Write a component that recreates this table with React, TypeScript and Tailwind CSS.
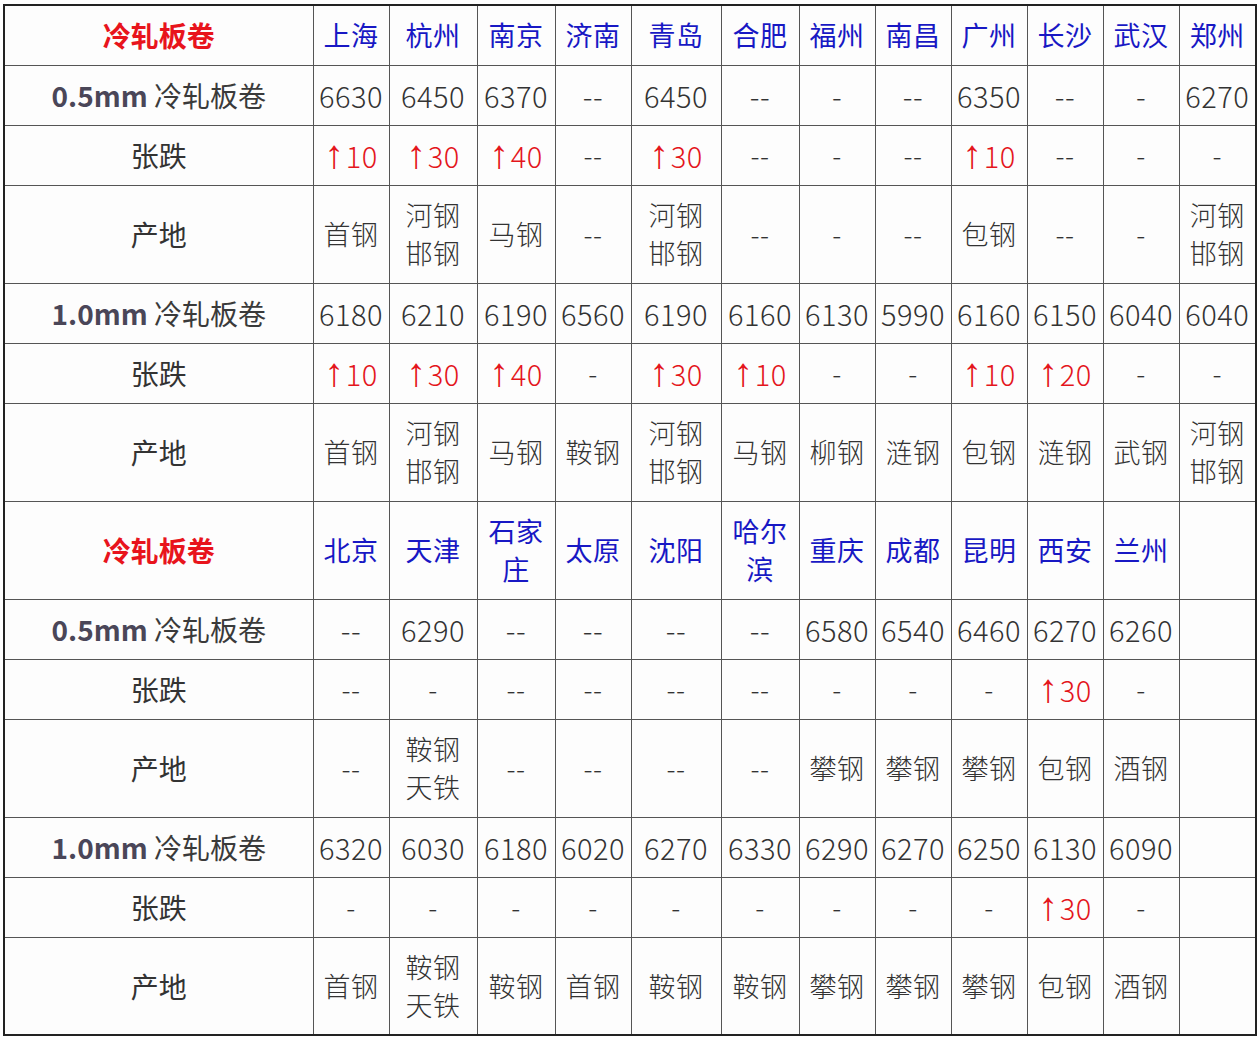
import React from "react";

type Cell = string;
type Row = { kind: "head" | "val" | "chg" | "src"; label: string; cells: Cell[] };

const widths = [309, 76, 88, 78, 76, 90, 78, 76, 76, 76, 76, 76, 77];

const rows: Row[] = [
  { kind: "head", label: "冷轧板卷", cells: ["上海", "杭州", "南京", "济南", "青岛", "合肥", "福州", "南昌", "广州", "长沙", "武汉", "郑州"] },
  { kind: "val", label: "0.5mm", cells: ["6630", "6450", "6370", "--", "6450", "--", "-", "--", "6350", "--", "-", "6270"] },
  { kind: "chg", label: "张跌", cells: ["↑10", "↑30", "↑40", "--", "↑30", "--", "-", "--", "↑10", "--", "-", "-"] },
  { kind: "src", label: "产地", cells: ["首钢", "河钢|邯钢", "马钢", "--", "河钢|邯钢", "--", "-", "--", "包钢", "--", "-", "河钢|邯钢"] },
  { kind: "val", label: "1.0mm", cells: ["6180", "6210", "6190", "6560", "6190", "6160", "6130", "5990", "6160", "6150", "6040", "6040"] },
  { kind: "chg", label: "张跌", cells: ["↑10", "↑30", "↑40", "-", "↑30", "↑10", "-", "-", "↑10", "↑20", "-", "-"] },
  { kind: "src", label: "产地", cells: ["首钢", "河钢|邯钢", "马钢", "鞍钢", "河钢|邯钢", "马钢", "柳钢", "涟钢", "包钢", "涟钢", "武钢", "河钢|邯钢"] },
  { kind: "head", label: "冷轧板卷", cells: ["北京", "天津", "石家|庄", "太原", "沈阳", "哈尔|滨", "重庆", "成都", "昆明", "西安", "兰州", ""] },
  { kind: "val", label: "0.5mm", cells: ["--", "6290", "--", "--", "--", "--", "6580", "6540", "6460", "6270", "6260", ""] },
  { kind: "chg", label: "张跌", cells: ["--", "-", "--", "--", "--", "--", "-", "-", "-", "↑30", "-", ""] },
  { kind: "src", label: "产地", cells: ["--", "鞍钢|天铁", "--", "--", "--", "--", "攀钢", "攀钢", "攀钢", "包钢", "酒钢", ""] },
  { kind: "val", label: "1.0mm", cells: ["6320", "6030", "6180", "6020", "6270", "6330", "6290", "6270", "6250", "6130", "6090", ""] },
  { kind: "chg", label: "张跌", cells: ["-", "-", "-", "-", "-", "-", "-", "-", "-", "↑30", "-", ""] },
  { kind: "src", label: "产地", cells: ["首钢", "鞍钢|天铁", "鞍钢", "首钢", "鞍钢", "鞍钢", "攀钢", "攀钢", "攀钢", "包钢", "酒钢", ""] },
];

function Label({ row }: { row: Row }) {
  if (row.kind === "head") {
    return <span className="font-bold text-[28px] text-[#e8141c]">{row.label}</span>;
  }
  if (row.kind === "val") {
    return (
      <span className="text-[28px] text-[#3a3a3a]">
        <span className="font-bold text-[#4a4658]">{row.label}</span> 冷轧板卷
      </span>
    );
  }
  return <span className="text-[28px] text-[#333]">{row.label}</span>;
}

function Value({ row, text }: { row: Row; text: string }) {
  const lines = text.split("|");
  if (row.kind === "head") {
    return (
      <div className="text-[27px] leading-[38px] text-[#1818c4]">
        {lines.map((l, i) => (
          <div key={i}>{l}</div>
        ))}
      </div>
    );
  }
  if (text.startsWith("↑")) {
    return (
      <div className="text-[29px] font-light leading-[38px] text-[#e4161c]">
        <span
          className="text-[40px] leading-[0px] mr-[1px]"
          style={{ fontFamily: '"Liberation Sans", "DejaVu Sans", sans-serif' }}
        >
          ↑
        </span>
        {text.slice(1)}
      </div>
    );
  }
  return (
    <div className={`${row.kind === "val" ? "text-[29px]" : "text-[27px]"} font-light leading-[38px] text-[#333]`}>
      {lines.map((l, i) => (
        <div key={i}>{l}</div>
      ))}
    </div>
  );
}

export default function App() {
  return (
    <div
      className="min-h-[1042px] w-[1260px] bg-white pl-[3px] pt-[4px]"
      style={{ fontFamily: '"Noto Sans CJK SC", "Noto Sans", sans-serif' }}
    >
      <table className="table-fixed border-collapse border-2 border-[#222] bg-[#fdfdfd] w-[1253px]">
        <colgroup>
          {widths.map((w, i) => (
            <col key={i} style={{ width: w }} />
          ))}
        </colgroup>
        <tbody>
          {rows.map((row, ri) => {
            const tall = row.kind === "src" || (row.kind === "head" && ri > 0);
            return (
              <tr key={ri} className={tall ? "h-[98px]" : "h-[60px]"}>
                <td className="border border-[#555] text-center align-middle p-0 whitespace-nowrap">
                  <Label row={row} />
                </td>
                {row.cells.map((c, ci) => (
                  <td
                    key={ci}
                    className="border border-[#555] text-center align-middle p-0 whitespace-nowrap tracking-[0.5px]"
                  >
                    <Value row={row} text={c} />
                  </td>
                ))}
              </tr>
            );
          })}
        </tbody>
      </table>
    </div>
  );
}
